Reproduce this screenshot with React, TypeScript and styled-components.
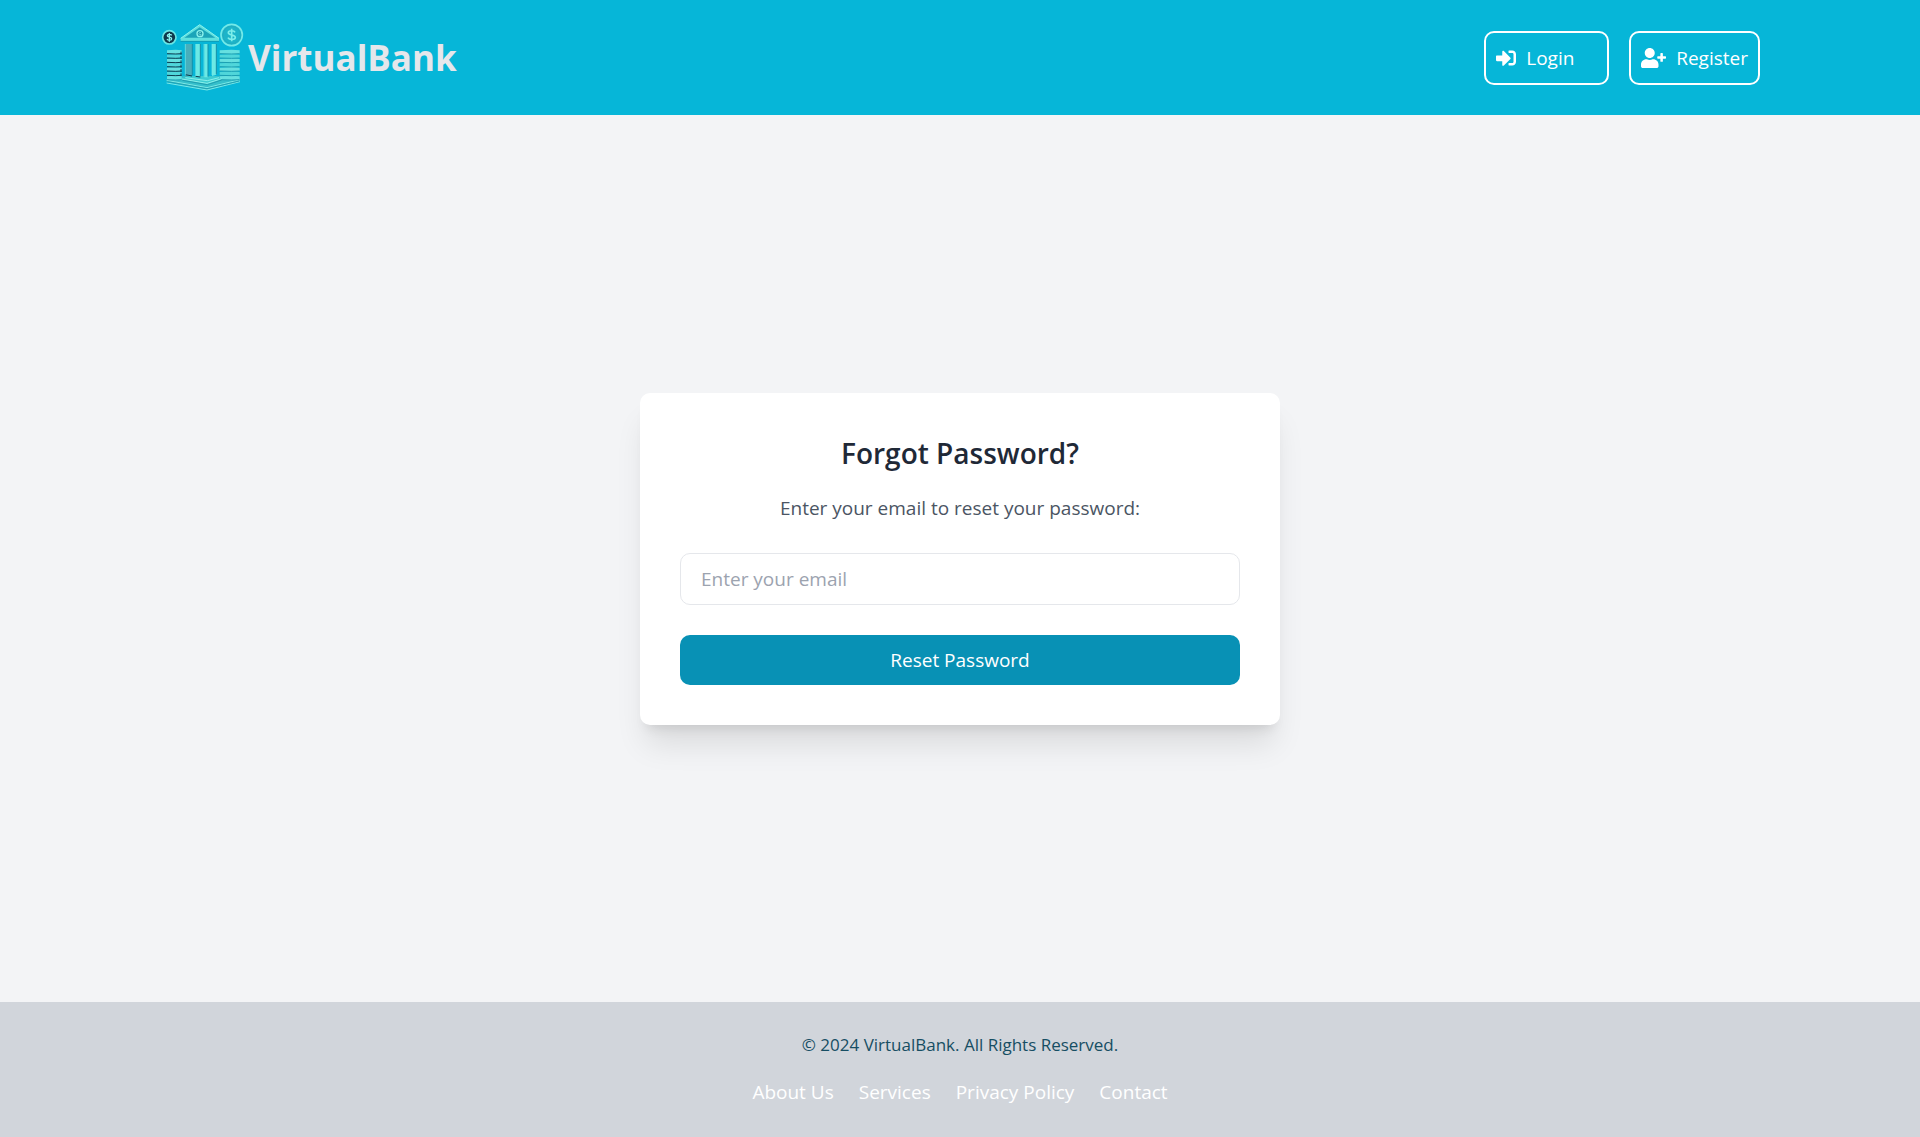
import React from "react";
import styled, { createGlobalStyle } from "styled-components";
import { FaSignInAlt, FaUserPlus } from "react-icons/fa";

const GlobalStyle = createGlobalStyle`
  *, *::before, *::after { box-sizing: border-box; }
  body {
    margin: 0;
    font-family: "Segoe UI", "Open Sans", "Noto Sans", sans-serif;
    font-size: 19px;
    line-height: 30px;
    color: #1f2937;
  }
  h1, p { margin: 0; }
  a { color: inherit; text-decoration: none; }
`;

const Page = styled.div`
  min-height: 100vh;
  display: flex;
  flex-direction: column;
  background: #f3f4f6;
`;

const Header = styled.header`
  background: #06b6d8;
  padding: 20px 160px;
  display: flex;
  align-items: center;
  justify-content: space-between;
`;

const Brand = styled.a`
  display: flex;
  align-items: center;
  gap: 3px;
`;

const BrandName = styled.span`
  font-size: 35px;
  line-height: 50px;
  font-weight: 700;
  color: #e5e7eb;
`;

const Nav = styled.nav`
  display: flex;
  gap: 20px;
`;

const NavLink = styled.a<{ $iconWidth: number }>`
  display: flex;
  align-items: center;
  gap: 10px;
  min-width: 125px;
  padding: 10px;
  border: 2px solid #fff;
  border-radius: 10px;
  color: #fff;

  svg {
    height: 20px;
    width: ${(props) => props.$iconWidth}px;
  }
`;

const Main = styled.main`
  flex: 1;
  display: flex;
  align-items: center;
  justify-content: center;
`;

const Card = styled.section`
  width: 100%;
  max-width: 640px;
  padding: 40px;
  background: #fff;
  border-radius: 10px;
  box-shadow: 0 25px 31px -6px rgba(0, 0, 0, 0.1), 0 10px 12px -7px rgba(0, 0, 0, 0.1);
  text-align: center;
`;

const Title = styled.h1`
  font-size: 28px;
  line-height: 40px;
  font-weight: 600;
  margin-bottom: 20px;
`;

const Form = styled.form`
  display: flex;
  flex-direction: column;
  gap: 30px;
`;

const Label = styled.label`
  color: #4b5563;
`;

const Input = styled.input`
  width: 100%;
  padding: 10px 20px;
  border: 1px solid #e5e7eb;
  border-radius: 10px;
  background: #fff;
  color: #1f2937;
  font: inherit;

  &::placeholder {
    color: #9ca3af;
    opacity: 1;
  }
`;

const Submit = styled.button`
  padding: 10px 20px;
  border: 0;
  border-radius: 10px;
  background: #0891b5;
  color: #fff;
  font: inherit;
  cursor: pointer;
`;

const Footer = styled.footer`
  display: flex;
  flex-direction: column;
  align-items: center;
  gap: 20px;
  padding: 30px 20px;
  background: #d1d5db;
`;

const Copyright = styled.p`
  font-size: 17px;
  line-height: 25px;
  color: #164e63;
`;

const FooterLinks = styled.nav`
  display: flex;
  gap: 25px;
  color: #fff;
`;

function Stack({ x, y, rows, dark }: { x: number; y: number; rows: number; dark?: boolean }) {
  const width = dark ? 44 : 60;
  const levels = Array.from({ length: rows }, (_, i) => y + i * 13);
  return (
    <g>
      {levels.map((top, i) => (
        <path
          key={top}
          d={`M${x} ${top}l${width * 0.6} -2l${width * 0.4} 2v10l-${width * 0.4} 2l-${width * 0.6} -2z`}
          fill={i % 2 ? "#4fd6da" : "#66e0e0"}
        />
      ))}
      {levels.map((top, i) => (
        <path
          key={top}
          d={`M${x} ${top + 10}l${width * 0.6} 1l${width * 0.4} -1`}
          fill="none"
          stroke={dark && i < 6 ? "#0c3c50" : "#1c9fb2"}
          strokeWidth={3}
        />
      ))}
      {dark && <path d={`M${x + 42} ${y + 4}v72`} stroke="#10445a" strokeWidth="3" strokeDasharray="9 4" />}
    </g>
  );
}

function Logo() {
  return (
    <svg width="85" height="75" viewBox="30 30 255 225" aria-hidden="true">
      <path d="M50 208l52-10h122l46 8v8l-98 26l-122-25z" fill="#35bfcb" />
      <path d="M50 211l121 22l99-24M50 219l121 21l99-25" fill="none" stroke="#7ce9e7" strokeWidth="3" />
      <path d="M52 215l119 21l97-23" fill="none" stroke="#1893a8" strokeWidth="2" />
      <Stack x={51} y={121} rows={7} dark />
      <Stack x={209} y={121} rows={7} />
      <path d="M96 207l18-8h84l18 8l-43 17z" fill="#3dcdd3" />
      <path d="M96 207l75 13l44-14M106 203l66 9l35-9" fill="none" stroke="#8bf0ea" strokeWidth="3" />
      <path d="M97 211l75 13l43-14" fill="none" stroke="#138ba2" strokeWidth="2" />

      <path d="M106 102h20v94l-20 4z" fill="#48aebb" />
      <path d="M138 102h13v98h-13zM163 102h11v100h-11zM186 102h13v92l-13 4z" fill="#6be9e5" />
      <path d="M127 102v94M151 102v97M174 102v98M199 102v91" stroke="#1590a8" strokeWidth="3" />
      <path d="M106 194l20 4M137 199l14 2" stroke="#0c3c50" strokeWidth="3" />
      <path d="M106 102v94M137 102v96M162 102v98M186 102v93" stroke="#7cece8" strokeWidth="2" />

      <path d="M92 85L149 44l58 41v8H92z" fill="#5fe0de" />
      <path d="M103 83l46-31l47 31z" fill="#1ba5b9" />
      <path d="M92 85L149 44l58 41" fill="none" stroke="#8bf3ed" strokeWidth="3" />
      <path d="M92 94h115" stroke="#168ea3" strokeWidth="2" />
      <circle cx="150" cy="71" r="9" fill="#168da2" stroke="#8bf3ed" strokeWidth="4" />
      <path d="M153 68a4 4 0 1 0 1 5h-4" fill="none" stroke="#8bf3ed" strokeWidth="2" />

      <circle cx="58" cy="82" r="20" fill="#10384a" stroke="#68e6e5" strokeWidth="5" />
      <path
        d="M65 76c-2-4-13-4-13 1c0 6 13 3 13 9c0 6-11 6-14 1M58 69v26"
        fill="none"
        stroke="#8bf3ed"
        strokeWidth="4"
      />
      <circle cx="245" cy="75" r="32" fill="#1cb4c9" stroke="#73e9e8" strokeWidth="5" />
      <circle cx="245" cy="75" r="26" fill="none" stroke="#25a7b9" strokeWidth="2" />
      <path
        d="M255 67c-3-7-20-6-20 1c0 9 21 5 21 14c0 8-18 9-22 1M245 56v38"
        fill="none"
        stroke="#7deeea"
        strokeWidth="5"
      />
    </svg>
  );
}

export default function App() {
  return (
    <Page>
      <GlobalStyle />
      <Header>
        <Brand href="#">
          <Logo />
          <BrandName>VirtualBank</BrandName>
        </Brand>
        <Nav aria-label="Account">
          <NavLink href="#login" $iconWidth={20}>
            <FaSignInAlt aria-hidden />
            Login
          </NavLink>
          <NavLink href="#register" $iconWidth={25}>
            <FaUserPlus aria-hidden />
            Register
          </NavLink>
        </Nav>
      </Header>
      <Main>
        <Card>
          <Title>Forgot Password?</Title>
          <Form onSubmit={(event) => event.preventDefault()}>
            <Label htmlFor="email">Enter your email to reset your password:</Label>
            <Input id="email" type="email" placeholder="Enter your email" />
            <Submit type="submit">Reset Password</Submit>
          </Form>
        </Card>
      </Main>
      <Footer>
        <Copyright>© 2024 VirtualBank. All Rights Reserved.</Copyright>
        <FooterLinks aria-label="Footer">
          <a href="#about">About Us</a>
          <a href="#services">Services</a>
          <a href="#privacy">Privacy Policy</a>
          <a href="#contact">Contact</a>
        </FooterLinks>
      </Footer>
    </Page>
  );
}
